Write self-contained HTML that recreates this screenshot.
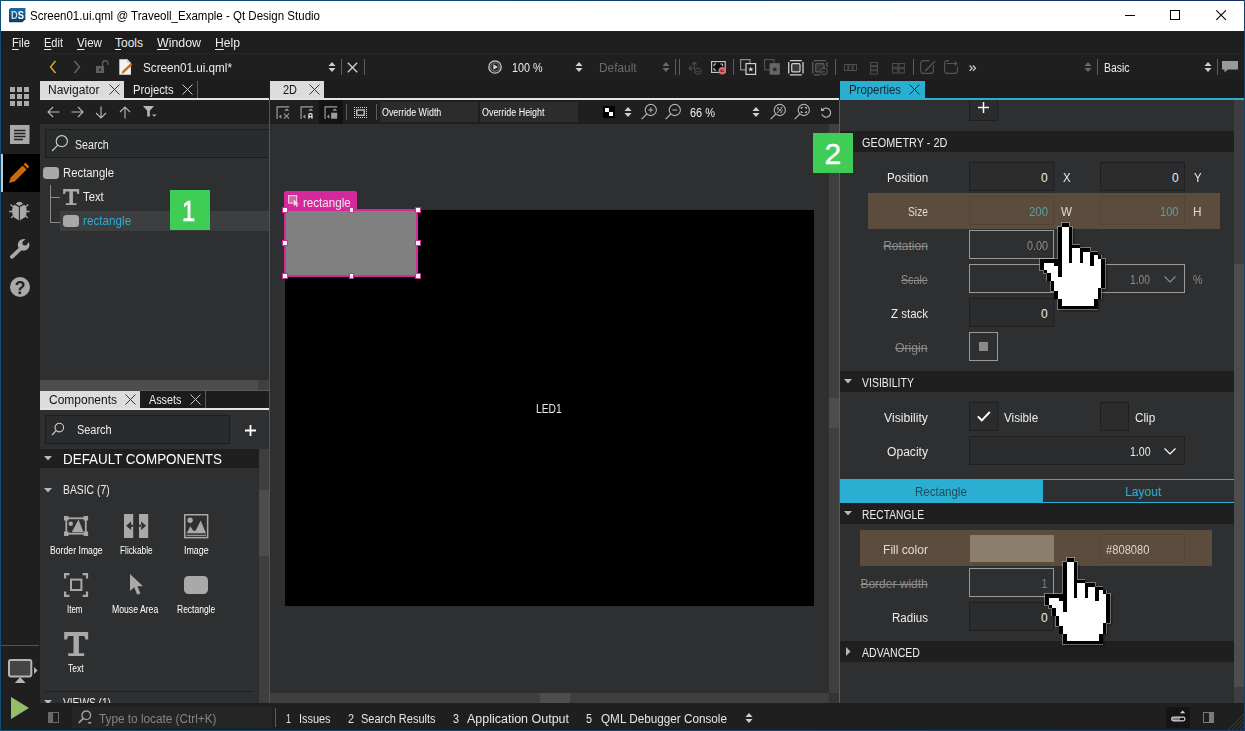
<!DOCTYPE html>
<html lang="en">
<head>
<meta charset="utf-8">
<title>Screen01.ui.qml @ Traveoll_Example - Qt Design Studio</title>
<style>
*{box-sizing:border-box;margin:0;padding:0}
html,body{width:1245px;height:731px;overflow:hidden;background:#1f1f1f}
body{font-family:"Liberation Sans",sans-serif;font-size:12px;color:#fff;position:relative}
#win{position:absolute;left:0;top:0;width:1245px;height:731px;background:#1f1f1f;overflow:hidden}
#win div,#win span,#win svg{position:absolute}
#win svg{overflow:visible}
.t{white-space:nowrap;transform-origin:0 0}
.t u{text-decoration-thickness:1px;text-underline-offset:1.5px}
.s{text-decoration:line-through;text-decoration-thickness:1px}
</style>
</head>
<body>
<div id="win">

<div style="left:0px;top:1px;width:1245px;height:30px;background:#fff;"></div>
<svg style="left:8.9px;top:7.9px;" width="16.4" height="14.2" viewBox="0 0 16.4 14.2"><defs><linearGradient id="dsg" x1="0" y1="0" x2="0" y2="1"><stop offset="0" stop-color="#1a6a9c"/><stop offset="1" stop-color="#0a3c64"/></linearGradient></defs><path d="M1.6 0H16.4V11.2L13.4 14.2H0V1.6Z" fill="url(#dsg)"/></svg>
<span class="t" style="left:10.60px;top:11.00px;font-size:10px;line-height:10px;color:#ffffff;font-weight:bold;transform:scaleX(0.9358);"><i style="font-style:normal;color:#c4d8e8">D</i>S</span>
<span class="t" style="left:30.30px;top:10.00px;font-size:12.5px;line-height:12.5px;color:#000;transform:scaleX(0.9209);">Screen01.ui.qml @ Traveoll_Example - Qt Design Studio</span>
<div style="left:1125px;top:15px;width:10px;height:1px;background:#000;"></div>
<svg style="left:1170px;top:10px;" width="10" height="10" viewBox="0 0 10 10"><rect x=".5" y=".5" width="9" height="9" fill="none" stroke="#000"/></svg>
<svg style="left:1216px;top:10px;" width="10" height="10" viewBox="0 0 10 10"><path d="M.3 .3L9.9 9.9M9.9 .3L.3 9.9" stroke="#000" stroke-width="1.1"/></svg>
<div style="left:0px;top:31px;width:1245px;height:23px;background:#1e1e1e;"></div>
<span class="t" style="left:12.00px;top:37.00px;font-size:12px;line-height:12px;color:#ececec;transform:scaleX(0.9309);"><u>F</u>ile</span>
<span class="t" style="left:44.00px;top:37.00px;font-size:12px;line-height:12px;color:#ececec;transform:scaleX(0.9188);"><u>E</u>dit</span>
<span class="t" style="left:77.00px;top:37.00px;font-size:12px;line-height:12px;color:#ececec;transform:scaleX(0.9692);"><u>V</u>iew</span>
<span class="t" style="left:115.00px;top:37.00px;font-size:12px;line-height:12px;color:#ececec;"><u>T</u>ools</span>
<span class="t" style="left:157.00px;top:37.00px;font-size:12px;line-height:12px;color:#ececec;transform:scaleX(1.0309);"><u>W</u>indow</span>
<span class="t" style="left:215.00px;top:37.00px;font-size:12px;line-height:12px;color:#ececec;transform:scaleX(1.0129);"><u>H</u>elp</span>
<div style="left:40px;top:54px;width:1205px;height:25px;background:#1f1f1f;"></div>
<div style="left:40px;top:53px;width:1205px;height:1px;background:#262626;"></div>
<svg style="left:49px;top:60px;" width="8" height="14" viewBox="0 0 8 14"><path d="M6.5 1L1.5 7L6.5 13" fill="none" stroke="#e8b21a" stroke-width="1.35"/></svg>
<svg style="left:73px;top:60px;" width="8" height="14" viewBox="0 0 8 14"><path d="M1.5 1L6.5 7L1.5 13" fill="none" stroke="#6a6a6a" stroke-width="1.35"/></svg>
<svg style="left:96px;top:60px;" width="13" height="13" viewBox="0 0 13 13"><rect x="0" y="6" width="8" height="7" fill="#5f5f5f"/><rect x="3" y="8.5" width="2" height="2.5" fill="#2a2a2a"/><path d="M6.5 6V3.5A2.7 2.7 0 0 1 12 3.5V5" fill="none" stroke="#5f5f5f" stroke-width="1.3"/></svg>
<svg style="left:119px;top:59px;" width="14" height="16" viewBox="0 0 14 16"><path d="M.3 .3H8.4L11.9 3.8V15.7H.3Z" fill="#f2f2f2"/><path d="M8.4 .3V3.8H11.9Z" fill="#bdbdbd"/><path d="M4 13.2L12.7 4.9" stroke="#c96a0c" stroke-width="2.3"/><path d="M2.5 14.8L3.2 12.3L5 14.1Z" fill="#c96a0c"/></svg>
<span class="t" style="left:143.00px;top:62.00px;font-size:12px;line-height:12px;color:#ececec;transform:scaleX(0.9739);">Screen01.ui.qml*</span>
<svg style="left:327.5px;top:61px;" width="8" height="12" viewBox="0 0 8 12"><path d="M0.5 5L4 1L7.5 5Z M0.5 7L4 11L7.5 7Z" fill="#d0d0d0"/></svg>
<div style="left:341px;top:59px;width:1px;height:16px;background:#5c5c5c;"></div>
<svg style="left:347px;top:62px;" width="11" height="11" viewBox="0 0 11 11"><path d="M.8 .8L10.2 10.2M10.2 .8L.8 10.2" stroke="#d0d0d0" stroke-width="1.3"/></svg>
<div style="left:364px;top:59px;width:1px;height:16px;background:#5c5c5c;"></div>
<svg style="left:488px;top:60px;" width="14" height="14" viewBox="0 0 14 14"><circle cx="7" cy="7" r="6.2" fill="none" stroke="#c8c8c8" stroke-width="1.3"/><circle cx="7" cy="7" r="4.2" fill="none" stroke="#9a9a9a" stroke-width=".8"/><path d="M5.3 4.2L10 7L5.3 9.8Z" fill="#d8d8d8"/></svg>
<span class="t" style="left:512.40px;top:62.00px;font-size:12px;line-height:12px;color:#ececec;transform:scaleX(0.8964);">100 %</span>
<svg style="left:574.5px;top:61px;" width="8" height="12" viewBox="0 0 8 12"><path d="M0.5 5L4 1L7.5 5Z M0.5 7L4 11L7.5 7Z" fill="#d0d0d0"/></svg>
<span class="t" style="left:599.40px;top:62.00px;font-size:12px;line-height:12px;color:#6a6a6a;transform:scaleX(0.9889);">Default</span>
<svg style="left:662.4px;top:61px;" width="8" height="12" viewBox="0 0 8 12"><path d="M0.5 5L4 1L7.5 5Z M0.5 7L4 11L7.5 7Z" fill="#6a6a6a"/></svg>
<div style="left:675px;top:59px;width:1px;height:16px;background:#5c5c5c;"></div>
<div style="left:679px;top:59px;width:1px;height:16px;background:#5c5c5c;"></div>
<svg style="left:688px;top:61px;" width="14" height="14" viewBox="0 0 14 14"><path d="M6.5 7.2V1.2M4.2 3.5L6.5 1.2L8.8 3.5M6.5 7.2H1.2M3.5 4.9L1.2 7.2L3.5 9.5" fill="none" stroke="#4c4c4c" stroke-width="1.1"/><path d="M6.5 8.5V12.5M8 7.2H12" fill="none" stroke="#4c4c4c" stroke-width="1" stroke-dasharray="1 1.4"/><circle cx="10" cy="10.2" r="3.1" fill="#1f1f1f" stroke="#4c4c4c" stroke-width="1"/><path d="M8.6 10.6H11.3M8.6 10.6L9.8 9.4" stroke="#4c4c4c" stroke-width=".9" fill="none"/></svg>
<svg style="left:710.5px;top:61px;" width="15" height="12" viewBox="0 0 15 12"><rect x=".6" y=".6" width="13.6" height="10.8" fill="#0c0c0c" stroke="#c4c4c4" stroke-width="1.2"/><path d="M3 5.2V3H5.2M9.4 3H11.6V5.2M3 6.9V9.1H5.2" fill="none" stroke="#e4e4e4" stroke-width=".9"/><circle cx="11.2" cy="9.7" r="3.7" fill="#e0686c"/><path d="M9.5 10.2H12.8M9.5 10.2L11 8.6" stroke="#4a2020" stroke-width="1" fill="none"/></svg>
<div style="left:733px;top:59px;width:1px;height:16px;background:#5c5c5c;"></div>
<svg style="left:740px;top:59px;" width="16" height="16" viewBox="0 0 16 16"><rect x=".6" y=".6" width="9.4" height="10.2" fill="none" stroke="#8e8e8e" stroke-width="1.2"/><rect x="6" y="4.6" width="9.6" height="10.8" fill="#1f1f1f" stroke="#d2d2d2" stroke-width="1.2"/><path d="M10.8 7.6L11.6 9.5H13.5L12 10.7L12.6 12.6L10.8 11.4L9 12.6L9.6 10.7L8.1 9.5H10Z" fill="#d2d2d2"/></svg>
<svg style="left:764px;top:59px;" width="16" height="16" viewBox="0 0 16 16"><rect x=".6" y=".6" width="9.4" height="10.2" fill="none" stroke="#505050" stroke-width="1.2"/><rect x="5.6" y="4.2" width="10.2" height="11.5" fill="#666"/><path d="M10.8 7.6L11.6 9.5H13.5L12 10.7L12.6 12.6L10.8 11.4L9 12.6L9.6 10.7L8.1 9.5H10Z" fill="#222"/></svg>
<svg style="left:788px;top:59.5px;" width="16" height="16" viewBox="0 0 16 16"><path d="M1.9 .7H13.8M1.9 14.8H13.8M.7 1.9V13.6M15 1.9V13.6" stroke="#d2d2d2" stroke-width="1.3"/><rect x="3.7" y="3.7" width="8.3" height="8.1" rx="1" fill="#3a3a3a" stroke="#d2d2d2" stroke-width="1.2"/></svg>
<svg style="left:812px;top:59.5px;" width="16" height="16" viewBox="0 0 16 16"><path d="M1.9 .7H13.8M1.9 14.8H8M.7 1.9V13.6M15 1.9V7.5" stroke="#5e5e5e" stroke-width="1.3"/><rect x="3.7" y="3.7" width="8.3" height="8.1" rx="1" fill="#303030" stroke="#5e5e5e" stroke-width="1.2"/><circle cx="12" cy="11.5" r="3.4" fill="#1f1f1f" stroke="#5e5e5e" stroke-width="1"/><path d="M10.4 12H13.4M10.4 12L11.7 10.7" stroke="#5e5e5e" stroke-width=".9" fill="none"/></svg>
<div style="left:835px;top:59px;width:1px;height:16px;background:#5c5c5c;"></div>
<svg style="left:844px;top:63.5px;" width="14" height="7" viewBox="0 0 14 7"><rect x=".5" y=".5" width="3.4" height="6" fill="none" stroke="#4e4e4e"/><rect x="4.8" y=".5" width="3.4" height="6" fill="none" stroke="#4e4e4e"/><rect x="9.1" y=".5" width="3.4" height="6" fill="none" stroke="#4e4e4e"/></svg>
<svg style="left:870px;top:61.5px;" width="9" height="13" viewBox="0 0 9 13"><rect x=".5" y=".5" width="7" height="3.3" fill="none" stroke="#4e4e4e"/><rect x=".5" y="4.6" width="7" height="3.3" fill="none" stroke="#4e4e4e"/><rect x=".5" y="8.7" width="7" height="3.3" fill="none" stroke="#4e4e4e"/></svg>
<svg style="left:892px;top:62.5px;" width="14" height="11" viewBox="0 0 14 11"><rect x=".5" y=".5" width="5.4" height="4.2" fill="none" stroke="#4e4e4e"/><rect x="7" y=".5" width="5.4" height="4.2" fill="none" stroke="#4e4e4e"/><rect x=".5" y="5.8" width="5.4" height="4.2" fill="none" stroke="#4e4e4e"/><rect x="7" y="5.8" width="5.4" height="4.2" fill="none" stroke="#4e4e4e"/></svg>
<div style="left:913px;top:59px;width:1px;height:16px;background:#5c5c5c;"></div>
<svg style="left:920px;top:60px;" width="16" height="15" viewBox="0 0 16 15"><path d="M9.5 .6H3.6A3 3 0 0 0 .6 3.6V10.4A3 3 0 0 0 3.6 13.4H10.4A3 3 0 0 0 13.4 10.4V5" fill="none" stroke="#565656" stroke-width="1.1"/><path d="M5 11.2L15 1" stroke="#565656" stroke-width="1.3"/></svg>
<svg style="left:944px;top:60px;" width="16" height="15" viewBox="0 0 16 15"><path d="M.6 5V10.4A3 3 0 0 0 3.6 13.4H10.4A3 3 0 0 0 13.4 10.4V6.5" fill="none" stroke="#565656" stroke-width="1.1"/><path d="M.6 5V3.6A3 3 0 0 1 3.6 .6H5M2.5 3.5H12.8M10.6 1.3L12.8 3.5L10.6 5.7" fill="none" stroke="#565656" stroke-width="1.1"/></svg>
<svg style="left:968.5px;top:64.5px;" width="8" height="7" viewBox="0 0 8 7"><path d="M.6 .5L3.2 3.2L.6 5.9M3.9 .5L6.5 3.2L3.9 5.9" fill="none" stroke="#d0d0d0" stroke-width="1.2"/></svg>
<svg style="left:1084.3px;top:61px;" width="8" height="12" viewBox="0 0 8 12"><path d="M0.5 5L4 1L7.5 5Z M0.5 7L4 11L7.5 7Z" fill="#6a6a6a"/></svg>
<div style="left:1097px;top:59px;width:1px;height:16px;background:#5c5c5c;"></div>
<span class="t" style="left:1103.60px;top:62.00px;font-size:12px;line-height:12px;color:#ececec;transform:scaleX(0.8724);">Basic</span>
<svg style="left:1204px;top:61px;" width="8" height="12" viewBox="0 0 8 12"><path d="M0.5 5L4 1L7.5 5Z M0.5 7L4 11L7.5 7Z" fill="#d0d0d0"/></svg>
<div style="left:1217px;top:59px;width:1px;height:16px;background:#5c5c5c;"></div>
<svg style="left:1222px;top:61px;" width="16" height="12" viewBox="0 0 16 12"><path d="M0 0H16V8.5H6L2.5 11.5V8.5H0Z" fill="#9a9a9a"/></svg>
<div style="left:1px;top:54px;width:39px;height:676px;background:#1f1f1f;"></div>
<svg style="left:10px;top:87px;" width="19" height="19" viewBox="0 0 19 19"><g fill="#a9a9a9"><rect x="0" y="0" width="5" height="5"/><rect x="7" y="0" width="5" height="5"/><rect x="14" y="0" width="5" height="5"/><rect x="0" y="7" width="5" height="5"/><rect x="7" y="7" width="5" height="5"/><rect x="14" y="7" width="5" height="5"/><rect x="0" y="14" width="5" height="5"/><rect x="7" y="14" width="5" height="5"/><rect x="14" y="14" width="5" height="5"/></g></svg>
<svg style="left:10px;top:125px;" width="20" height="19" viewBox="0 0 20 19"><rect width="19.5" height="19" fill="#a9a9a9"/><path d="M4 5.5H15.5M4 8.5H15.5M4 11.5H15.5M4 14.5H13" stroke="#222" stroke-width="1.3"/></svg>
<div style="left:1px;top:154px;width:39px;height:38px;background:#000;"></div>
<div style="left:1px;top:154px;width:2px;height:38px;background:#c8c8c8;"></div>
<svg style="left:8px;top:162px;" width="22" height="22" viewBox="0 0 22 22"><path d="M1 21L2.6 15.4L14.6 3.4L18.6 7.4L6.6 19.4Z" fill="#c96a0c"/><path d="M15.6 2.4L17.4 .6L21.4 4.6L19.6 6.4Z" fill="#c96a0c"/></svg>
<svg style="left:9px;top:200px;" width="22" height="21" viewBox="0 0 22 21"><path d="M6.6 3.7Q10.4 -.4 14.2 3.7L10.4 5.9Z" fill="#a9a9a9"/><path d="M9.9 7.1L5.5 4.7Q3.1 6.6 3.1 11.2Q3.1 15.2 5 17.2L9.9 20.4Z" fill="#a9a9a9"/><path d="M10.9 7.1L15.3 4.7Q17.7 6.6 17.7 11.2Q17.7 15.2 15.8 17.2L10.9 20.4Z" fill="#a9a9a9"/><path d="M4.4 7L1.5 4.6M16.4 7L19.3 4.6M3.4 11.5H.2M17.4 11.5H20.6M4.6 15.6L2 17.9M16.2 15.6L18.8 17.9" stroke="#a9a9a9" stroke-width="1.3"/></svg>
<svg style="left:9px;top:238px;" width="22" height="22" viewBox="0 0 22 22"><path d="M2.9 18.8L12.5 9.8" stroke="#a9a9a9" stroke-width="3.8" stroke-linecap="round"/><circle cx="14.6" cy="6.9" r="5.85" fill="#a9a9a9"/><circle cx="15.9" cy="5" r="2.5" fill="#1f1f1f"/><path d="M15.9 5L22.5 -1.6" stroke="#1f1f1f" stroke-width="4.4"/></svg>
<svg style="left:10px;top:277px;" width="20" height="20" viewBox="0 0 20 20"><circle cx="10" cy="10" r="10" fill="#a9a9a9"/></svg>
<span class="t" style="left:14.65px;top:280.00px;font-size:17.5px;line-height:17.5px;color:#1f1f1f;font-weight:bold;">?</span>
<div style="left:1px;top:645px;width:38px;height:1px;background:#555;"></div>
<svg style="left:8px;top:659px;" width="25" height="25" viewBox="0 0 25 25"><rect x="1" y="1" width="22.3" height="16.4" rx="1.8" fill="#454545" stroke="#b4b4b4" stroke-width="2"/><path d="M12.2 18L17.6 24H6.8Z" fill="#b4b4b4"/></svg>
<svg style="left:34px;top:667px;" width="4" height="7" viewBox="0 0 4 7"><path d="M0 0L3.5 3.5L0 7Z" fill="#b4b4b4"/></svg>
<svg style="left:11px;top:697px;" width="18" height="22" viewBox="0 0 18 22"><path d="M0 0L18 11L0 22Z" fill="#93bf6b"/></svg>
<div style="left:40px;top:79px;width:229px;height:311px;background:#2e2f30;"></div>
<div style="left:40px;top:79px;width:229px;height:19px;background:#1c1c1c;"></div>
<div style="left:40px;top:81px;width:84px;height:17px;background:#dcdcdc;"></div>
<span class="t" style="left:48.40px;top:84.00px;font-size:12.5px;line-height:12.5px;color:#141414;transform:scaleX(0.9608);">Navigator</span>
<svg style="left:108.5px;top:84px;" width="11" height="11" viewBox="0 0 11 11"><path d="M.5 .5L10.5 10.5M10.5 .5L.5 10.5" stroke="#333" stroke-width="1"/></svg>
<span class="t" style="left:132.50px;top:84.00px;font-size:12.5px;line-height:12.5px;color:#ececec;transform:scaleX(0.8969);">Projects</span>
<svg style="left:182px;top:84px;" width="11" height="11" viewBox="0 0 11 11"><path d="M.5 .5L10.5 10.5M10.5 .5L.5 10.5" stroke="#c8c8c8" stroke-width="1"/></svg>
<div style="left:197px;top:81px;width:1px;height:17px;background:#5c5c5c;"></div>
<div style="left:40px;top:98px;width:229px;height:2px;background:#e4e4e4;"></div>
<div style="left:40px;top:100px;width:229px;height:24px;background:#1f1f1f;"></div>
<svg style="left:47px;top:105.5px;" width="13" height="12" viewBox="0 0 13 12"><path d="M12.5 6H1M6 1L1 6L6 11" fill="none" stroke="#b8b8b8" stroke-width="1.1"/></svg>
<svg style="left:71px;top:105.5px;" width="13" height="12" viewBox="0 0 13 12"><path d="M.5 6H12M7 1L12 6L7 11" fill="none" stroke="#b8b8b8" stroke-width="1.1"/></svg>
<svg style="left:95px;top:105.5px;" width="12" height="13" viewBox="0 0 12 13"><path d="M6 .5V12M1 7L6 12L11 7" fill="none" stroke="#b8b8b8" stroke-width="1.1"/></svg>
<svg style="left:119px;top:105.5px;" width="12" height="13" viewBox="0 0 12 13"><path d="M6 12.5V1M1 6L6 1L11 6" fill="none" stroke="#b8b8b8" stroke-width="1.1"/></svg>
<svg style="left:143px;top:106px;" width="14" height="12" viewBox="0 0 14 12"><path d="M0 0H11L6.8 4.8V10.5H4.2V4.8Z" fill="#b8b8b8"/><path d="M9 8.5H13.5L11.25 10.8Z" fill="#b8b8b8"/></svg>
<div style="left:45px;top:129px;width:225px;height:29px;background:#2a2b2c;border:1px solid #1d1d1d;"></div>
<svg style="left:51px;top:134px;" width="18" height="18" viewBox="0 0 18 18"><circle cx="10.8" cy="7.2" r="5.6" fill="none" stroke="#d0d0d0" stroke-width="1.1"/><path d="M6.8 11.2L1 17" stroke="#d0d0d0" stroke-width="1.1"/></svg>
<span class="t" style="left:74.60px;top:139.00px;font-size:12.5px;line-height:12.5px;color:#ececec;transform:scaleX(0.8509);">Search</span>
<div style="left:43px;top:167px;width:16px;height:12px;background:#a9a9a9;border-radius:3.5px;"></div>
<span class="t" style="left:63.40px;top:167.00px;font-size:12.5px;line-height:12.5px;color:#ececec;transform:scaleX(0.9061);">Rectangle</span>
<div style="left:50px;top:185px;width:1px;height:38px;background:#8a8a8a;"></div>
<div style="left:50px;top:197px;width:10px;height:1px;background:#8a8a8a;"></div>
<div style="left:50px;top:222px;width:10px;height:1px;background:#8a8a8a;"></div>
<svg style="left:62.7px;top:189px;" width="16.3" height="16" viewBox="0 0 16 16"><path d="M0 0H16V5H14.2L13.4 2.6H9.8V14.2H13.3V16H2.7V14.2H6.2V2.6H2.6L1.8 5H0Z" fill="#a9a9a9"/></svg>
<span class="t" style="left:83.30px;top:191.00px;font-size:12.5px;line-height:12.5px;color:#ececec;transform:scaleX(0.9030);">Text</span>
<div style="left:60px;top:211px;width:209px;height:20px;background:#3d3e3f;"></div>
<div style="left:63px;top:215px;width:16px;height:12px;background:#a9a9a9;border-radius:3.5px;"></div>
<span class="t" style="left:83.30px;top:215.00px;font-size:12.5px;line-height:12.5px;color:#2eaed4;transform:scaleX(0.9373);">rectangle</span>
<div style="left:40px;top:380px;width:218px;height:10px;background:#4d4d4d;"></div>
<div style="left:258px;top:380px;width:11px;height:10px;background:#404040;"></div>
<div style="left:40px;top:390px;width:229px;height:1px;background:#4d4d4d;"></div>
<div style="left:40px;top:391px;width:229px;height:312px;background:#2e2f30;"></div>
<div style="left:40px;top:391px;width:229px;height:17px;background:#1c1c1c;"></div>
<div style="left:40px;top:391px;width:100px;height:17px;background:#dcdcdc;"></div>
<span class="t" style="left:48.50px;top:394.00px;font-size:12.5px;line-height:12.5px;color:#141414;transform:scaleX(0.9594);">Components</span>
<svg style="left:124.5px;top:394px;" width="11" height="11" viewBox="0 0 11 11"><path d="M.5 .5L10.5 10.5M10.5 .5L.5 10.5" stroke="#333" stroke-width="1"/></svg>
<span class="t" style="left:148.80px;top:394.00px;font-size:12.5px;line-height:12.5px;color:#ececec;transform:scaleX(0.8637);">Assets</span>
<svg style="left:190px;top:394px;" width="11" height="11" viewBox="0 0 11 11"><path d="M.5 .5L10.5 10.5M10.5 .5L.5 10.5" stroke="#c8c8c8" stroke-width="1"/></svg>
<div style="left:205px;top:391px;width:1px;height:17px;background:#5c5c5c;"></div>
<div style="left:40px;top:408px;width:229px;height:2px;background:#e4e4e4;"></div>
<div style="left:140px;top:390px;width:129px;height:1px;background:#5a5a5a;"></div>
<div style="left:45px;top:415px;width:185px;height:29px;background:#2a2b2c;border:1px solid #1d1d1d;"></div>
<svg style="left:51px;top:422px;" width="14" height="14" viewBox="0 0 14 14"><circle cx="8.3" cy="5.6" r="4.3" fill="none" stroke="#d0d0d0" stroke-width="1.1"/><path d="M5.2 8.7L1 13" stroke="#d0d0d0" stroke-width="1.1"/></svg>
<span class="t" style="left:77.00px;top:424.00px;font-size:12.5px;line-height:12.5px;color:#ececec;transform:scaleX(0.8736);">Search</span>
<svg style="left:245px;top:425px;" width="11" height="11" viewBox="0 0 11 11"><path d="M5.5 0V11M0 5.5H11" stroke="#fff" stroke-width="1.8"/></svg>
<div style="left:40px;top:449px;width:219px;height:19px;background:#1f1f1f;"></div>
<svg style="left:44px;top:455.5px;" width="8" height="5" viewBox="0 0 8 5"><path d="M0 0H8L4 4.5Z" fill="#b8b8b8"/></svg>
<span class="t" style="left:62.70px;top:451.00px;font-size:15px;line-height:15px;color:#fff;transform:scaleX(0.8942);">DEFAULT COMPONENTS</span>
<div style="left:259px;top:449px;width:10px;height:254px;background:#3e3e3e;"></div>
<div style="left:259px;top:490px;width:10px;height:66px;background:#4d4d4d;"></div>
<svg style="left:44px;top:487.5px;" width="8" height="5" viewBox="0 0 8 5"><path d="M0 0H8L4 4.5Z" fill="#b8b8b8"/></svg>
<span class="t" style="left:62.70px;top:484.00px;font-size:12.5px;line-height:12.5px;color:#ececec;transform:scaleX(0.8282);">BASIC (7)</span>
<svg style="left:64px;top:516px;" width="24.1" height="20" viewBox="0 0 24.1 20"><rect x="2.3" y="2.3" width="19.5" height="15.4" fill="none" stroke="#a9a9a9" stroke-width="1.8"/><rect x="0" y="0" width="4.5" height="4.5" fill="#a9a9a9"/><rect x="19.6" y="0" width="4.5" height="4.5" fill="#a9a9a9"/><rect x="0" y="15.5" width="4.5" height="4.5" fill="#a9a9a9"/><rect x="19.6" y="15.5" width="4.5" height="4.5" fill="#a9a9a9"/><circle cx="6.8" cy="7.7" r="2.2" fill="#a9a9a9"/><path d="M7.7 16.2L14.5 3.5L19.6 16.2Z" fill="#a9a9a9"/></svg>
<svg style="left:123.9px;top:514px;" width="24.2" height="24" viewBox="0 0 24.2 24"><rect x="0" y="0" width="9.2" height="24" fill="#a9a9a9"/><rect x="15" y="0" width="9.2" height="24" fill="#a9a9a9"/><path d="M2.1 11.8L7.1 7.5V16.1Z M6.5 10.8H9.2V12.8H6.5Z M22.1 11.8L17.1 7.5V16.1Z M15 10.8H17.7V12.8H15Z" fill="#2e2f30"/></svg>
<svg style="left:183.9px;top:513.8px;" width="24.4" height="24.4" viewBox="0 0 24.4 24.4"><rect x=".75" y=".75" width="22.9" height="22.9" fill="none" stroke="#a9a9a9" stroke-width="1.5"/><circle cx="6.1" cy="6.2" r="2.7" fill="#a9a9a9"/><path d="M2.6 19.2L6.4 12.2L9.2 16.7H11.6L16.7 6.4L22 19.2Z" fill="#a9a9a9"/><rect x="2.6" y="20.8" width="19.4" height="1" fill="#a9a9a9"/></svg>
<span class="t" style="left:49.60px;top:546.00px;font-size:10px;line-height:10px;color:#ffffff;transform:scaleX(0.8682);">Border Image</span>
<span class="t" style="left:119.50px;top:546.00px;font-size:10px;line-height:10px;color:#ffffff;transform:scaleX(0.8262);">Flickable</span>
<span class="t" style="left:183.50px;top:546.00px;font-size:10px;line-height:10px;color:#ffffff;transform:scaleX(0.8887);">Image</span>
<span class="t" style="left:66.50px;top:605.00px;font-size:10px;line-height:10px;color:#ffffff;transform:scaleX(0.7970);">Item</span>
<span class="t" style="left:111.80px;top:605.00px;font-size:10px;line-height:10px;color:#ffffff;transform:scaleX(0.8657);">Mouse Area</span>
<span class="t" style="left:176.80px;top:605.00px;font-size:10px;line-height:10px;color:#ffffff;transform:scaleX(0.8483);">Rectangle</span>
<span class="t" style="left:67.50px;top:664.00px;font-size:10px;line-height:10px;color:#ffffff;transform:scaleX(0.8452);">Text</span>
<svg style="left:64px;top:573px;" width="24.1" height="24" viewBox="0 0 24.1 24"><path d="M1.1 5.5V1.1H5.5M18.6 1.1H23V5.5M23 18.5V22.9H18.6M5.5 22.9H1.1V18.5" fill="none" stroke="#a9a9a9" stroke-width="2.2"/><rect x="7" y="6.6" width="10.4" height="10.4" fill="none" stroke="#a9a9a9" stroke-width="2"/></svg>
<svg style="left:129.6px;top:573.7px;" width="14" height="23" viewBox="0 0 14 23"><path d="M0 0V17L4.2 13.2L7.2 20.8L10.4 19.5L7.4 12.2H13Z" fill="#a9a9a9"/></svg>
<div style="left:184px;top:576px;width:24.3px;height:18px;background:#a9a9a9;border-radius:4.5px;"></div>
<svg style="left:64px;top:632px;" width="24.4" height="24" viewBox="0 0 16 16"><path d="M0 0H16V5H14.2L13.4 2.6H9.8V14.2H13.3V16H2.7V14.2H6.2V2.6H2.6L1.8 5H0Z" fill="#a9a9a9"/></svg>
<div style="left:45px;top:691px;width:209px;height:1px;background:#1f1f1f;"></div>
<svg style="left:44px;top:700px;" width="8" height="5" viewBox="0 0 8 5"><path d="M0 0H8L4 4.5Z" fill="#b8b8b8"/></svg>
<span class="t" style="left:62.70px;top:697.00px;font-size:12.5px;line-height:12.5px;color:#ececec;transform:scaleX(0.8131);">VIEWS (1)</span>
<div style="left:270px;top:79px;width:569px;height:624px;background:#2e2f30;"></div>
<div style="left:269px;top:100px;width:1px;height:603px;background:#555;"></div>
<div style="left:270px;top:79px;width:569px;height:19px;background:#1c1c1c;"></div>
<div style="left:270px;top:81px;width:54px;height:17px;background:#dcdcdc;"></div>
<span class="t" style="left:282.50px;top:84.00px;font-size:12.5px;line-height:12.5px;color:#141414;transform:scaleX(0.8761);">2D</span>
<svg style="left:308.5px;top:84px;" width="11" height="11" viewBox="0 0 11 11"><path d="M.5 .5L10.5 10.5M10.5 .5L.5 10.5" stroke="#333" stroke-width="1"/></svg>
<div style="left:270px;top:98px;width:569px;height:2px;background:#e4e4e4;"></div>
<div style="left:270px;top:100px;width:569px;height:24px;background:#1f1f1f;"></div>
<div style="left:319px;top:100px;width:24px;height:24px;background:#131313;"></div>
<svg style="left:275.7px;top:106px;" width="14" height="14" viewBox="0 0 14 14"><path d="M1.1 13V.8H13.3" fill="none" stroke="#9c9c9c" stroke-width="1.2"/><path d="M2.9 10.5L5.3 8.4V12.7Z" fill="#9c9c9c"/><path d="M8.2 4.8L10.8 2.6L13.3 4.8Z" fill="#9c9c9c"/><path d="M7.9 7.6L13.1 12.7M13.1 7.6L7.9 12.7" stroke="#9c9c9c" stroke-width="1.1"/></svg>
<svg style="left:299.8px;top:106px;" width="14" height="14" viewBox="0 0 14 14"><path d="M1.1 13V.8H13.3" fill="none" stroke="#9c9c9c" stroke-width="1.2"/><path d="M2.9 10.5L5.3 8.4V12.7Z" fill="#9c9c9c"/><path d="M8.2 4.8L10.8 2.6L13.3 4.8Z" fill="#9c9c9c"/><path d="M8.9 12.8V8.7A1.1 1.1 0 0 1 10 7.6H10.9A1.1 1.1 0 0 1 12 8.7V12.8M8.9 10.7H12" fill="none" stroke="#e0e0e0" stroke-width="1.3"/></svg>
<svg style="left:324px;top:106px;" width="14" height="14" viewBox="0 0 14 14"><path d="M1.1 13V.8H13.3" fill="none" stroke="#9c9c9c" stroke-width="1.2"/><path d="M2.9 10.5L5.3 8.4V12.7Z" fill="#9c9c9c"/><path d="M8.2 4.8L10.8 2.6L13.3 4.8Z" fill="#9c9c9c"/><rect x="7.1" y="6.7" width="6.1" height="6" fill="#9c9c9c"/></svg>
<div style="left:346px;top:104px;width:1px;height:16px;background:#5c5c5c;"></div>
<svg style="left:354px;top:107px;" width="13" height="11" viewBox="0 0 13 11"><path d="M0 .5H13M0 10.5H13M.5 0V11M12.5 0V11" fill="none" stroke="#d8d8d8" stroke-width="1" stroke-dasharray="1 1" shape-rendering="crispEdges"/><rect x="2.8" y="3" width="7.4" height="5.2" fill="none" stroke="#d8d8d8" stroke-width="1.2"/></svg>
<div style="left:376px;top:104px;width:1px;height:16px;background:#5c5c5c;"></div>
<div style="left:380px;top:102px;width:98px;height:20px;background:#2b2c2d;"></div>
<span class="t" style="left:381.70px;top:108.00px;font-size:10px;line-height:10px;color:#ffffff;transform:scaleX(0.8892);">Override Width</span>
<div style="left:480px;top:102px;width:98px;height:20px;background:#2b2c2d;"></div>
<span class="t" style="left:482.00px;top:108.00px;font-size:10px;line-height:10px;color:#ffffff;transform:scaleX(0.8925);">Override Height</span>
<div style="left:603px;top:106px;width:12px;height:12px;background:#000;"></div>
<div style="left:605px;top:108px;width:4px;height:4px;background:#fff;"></div>
<div style="left:609px;top:112px;width:4px;height:4px;background:#fff;"></div>
<svg style="left:623.5px;top:106px;" width="8" height="12" viewBox="0 0 8 12"><path d="M0.5 5L4 1L7.5 5Z M0.5 7L4 11L7.5 7Z" fill="#d0d0d0"/></svg>
<svg style="left:641px;top:104.4px;" width="16" height="16" viewBox="0 0 16 16"><circle cx="9.8" cy="6" r="5.6" fill="none" stroke="#b4b4b4" stroke-width="1.1"/><path d="M5.8 10L.6 15.2" stroke="#b4b4b4" stroke-width="1.1"/><path d="M7.3 6H12.3M9.8 3.5V8.5" stroke="#b4b4b4" stroke-width="1"/></svg>
<svg style="left:665.2px;top:104.4px;" width="16" height="16" viewBox="0 0 16 16"><circle cx="9.8" cy="6" r="5.6" fill="none" stroke="#b4b4b4" stroke-width="1.1"/><path d="M5.8 10L.6 15.2" stroke="#b4b4b4" stroke-width="1.1"/><path d="M7.3 6H12.3" stroke="#b4b4b4" stroke-width="1"/></svg>
<span class="t" style="left:690.40px;top:107.00px;font-size:12px;line-height:12px;color:#ececec;transform:scaleX(0.9140);">66 %</span>
<svg style="left:752.3px;top:106px;" width="8" height="12" viewBox="0 0 8 12"><path d="M0.5 5L4 1L7.5 5Z M0.5 7L4 11L7.5 7Z" fill="#d0d0d0"/></svg>
<svg style="left:770px;top:104.4px;" width="16" height="16" viewBox="0 0 16 16"><circle cx="9.8" cy="6" r="5.6" fill="none" stroke="#b4b4b4" stroke-width="1.1"/><path d="M5.8 10L.6 15.2" stroke="#b4b4b4" stroke-width="1.1"/><path d="M7.6 3.8L12 8.2M12 3.8L7.6 8.2" stroke="#b4b4b4" stroke-width="1"/><rect x="7.3" y="3.5" width="5" height="5" fill="none" stroke="#b4b4b4" stroke-width=".8" stroke-dasharray="1.5 2"/></svg>
<svg style="left:793.7px;top:104.4px;" width="16" height="16" viewBox="0 0 16 16"><circle cx="9.8" cy="6" r="5.6" fill="none" stroke="#b4b4b4" stroke-width="1.1"/><path d="M5.8 10L.6 15.2" stroke="#b4b4b4" stroke-width="1.1"/><path d="M7.3 5V3.5H8.8M10.8 3.5H12.3V5M12.3 7V8.5H10.8M8.8 8.5H7.3V7" fill="none" stroke="#b4b4b4" stroke-width="1.1"/></svg>
<svg style="left:820px;top:106px;" width="12" height="12" viewBox="0 0 12 12"><path d="M2.6 3.8A4.5 4.5 0 1 1 1.9 8.3" fill="none" stroke="#b4b4b4" stroke-width="1.2"/><path d="M1 1.4V5H4.6Z" fill="#b4b4b4"/></svg>
<div style="left:829px;top:124px;width:10px;height:569px;background:#3f3f3f;"></div>
<div style="left:829px;top:398px;width:10px;height:30px;background:#4d4d4d;"></div>
<div style="left:270px;top:693px;width:559px;height:10px;background:#3f3f3f;"></div>
<div style="left:540px;top:693px;width:30px;height:10px;background:#4d4d4d;"></div>
<div style="left:829px;top:693px;width:10px;height:10px;background:#333435;"></div>
<div style="left:839px;top:100px;width:1px;height:603px;background:#5c5c5c;"></div>
<div style="left:285px;top:210px;width:529px;height:396px;background:#000;"></div>
<span class="t" style="left:535.60px;top:402.00px;font-size:13px;line-height:13px;color:#e8e8e8;transform:scaleX(0.7934);">LED1</span>
<div style="left:284px;top:209px;width:134.2px;height:68px;background:#808080;border:2px solid #d5289b;"></div>
<div style="left:284px;top:191px;width:73.2px;height:19px;background:#d5289b;border-radius:2.5px 2.5px 0 0;"></div>
<svg style="left:288px;top:195px;" width="11" height="12" viewBox="0 0 11 12"><rect x=".6" y=".6" width="8" height="7.5" fill="#c86aa8" stroke="#f2c4e2" stroke-width="1.2"/><path d="M5.8 4.5V11.2L7.5 9.7L8.7 12L9.9 11.4L8.8 9.2H10.8Z" fill="#f6d6ec"/></svg>
<span class="t" style="left:303.40px;top:197.00px;font-size:12.5px;line-height:12.5px;color:#ececec;transform:scaleX(0.9276);">rectangle</span>
<div style="left:282.25px;top:207.25px;width:5.5px;height:5.5px;background:#fff;border:.8px solid #d5289b;"></div>
<div style="left:348.75px;top:207.25px;width:5.5px;height:5.5px;background:#fff;border:.8px solid #d5289b;"></div>
<div style="left:415.25px;top:207.25px;width:5.5px;height:5.5px;background:#fff;border:.8px solid #d5289b;"></div>
<div style="left:282.25px;top:240.25px;width:5.5px;height:5.5px;background:#fff;border:.8px solid #d5289b;"></div>
<div style="left:415.25px;top:240.25px;width:5.5px;height:5.5px;background:#fff;border:.8px solid #d5289b;"></div>
<div style="left:282.25px;top:273.25px;width:5.5px;height:5.5px;background:#fff;border:.8px solid #d5289b;"></div>
<div style="left:348.75px;top:273.25px;width:5.5px;height:5.5px;background:#fff;border:.8px solid #d5289b;"></div>
<div style="left:415.25px;top:273.25px;width:5.5px;height:5.5px;background:#fff;border:.8px solid #d5289b;"></div>
<div style="left:840px;top:79px;width:405px;height:624px;background:#2e2f30;"></div>
<div style="left:840px;top:79px;width:405px;height:19px;background:#1c1c1c;"></div>
<div style="left:840px;top:81px;width:84.5px;height:17px;background:#2aafd3;"></div>
<span class="t" style="left:848.50px;top:84.00px;font-size:12.5px;line-height:12.5px;color:#14262e;transform:scaleX(0.9127);">Properties</span>
<svg style="left:909px;top:84px;" width="11" height="11" viewBox="0 0 11 11"><path d="M.5 .5L10.5 10.5M10.5 .5L.5 10.5" stroke="#14262e" stroke-width="1"/></svg>
<div style="left:840px;top:98px;width:405px;height:2px;background:#2aafd3;"></div>
<div style="left:1234px;top:100px;width:10px;height:164px;background:#3d3e3f;"></div>
<div style="left:1234px;top:264px;width:10px;height:423px;background:#4d4d4d;"></div>
<div style="left:1234px;top:687px;width:10px;height:16px;background:#3d3e3f;"></div>
<div style="left:969px;top:100px;width:29px;height:21px;background:#2b2c2d;border:1px solid #1f1f1f;border-top:none;"></div>
<svg style="left:978px;top:101.5px;" width="11" height="11" viewBox="0 0 11 11"><path d="M5.5 0V11M0 5.5H11" stroke="#fff" stroke-width="1.5"/></svg>
<div style="left:840px;top:131px;width:394px;height:21px;background:#1f1f1f;"></div>
<span class="t" style="left:862.00px;top:137.00px;font-size:12px;line-height:12px;color:#ececec;transform:scaleX(0.9051);">GEOMETRY - 2D</span>
<span class="t" style="left:886.70px;top:172.00px;font-size:12px;line-height:12px;color:#ececec;transform:scaleX(0.9650);">Position</span>
<div style="left:969px;top:162px;width:85px;height:29px;background:#2b2c2d;border:1px solid #1f1f1f;"></div>
<span class="t" style="left:1040.93px;top:172.00px;font-size:12px;line-height:12px;color:#ececec;">0</span>
<span class="t" style="left:1062.80px;top:172.00px;font-size:12px;line-height:12px;color:#ececec;transform:scaleX(0.9495);">X</span>
<div style="left:1100px;top:162px;width:85px;height:29px;background:#2b2c2d;border:1px solid #1f1f1f;"></div>
<span class="t" style="left:1172.03px;top:172.00px;font-size:12px;line-height:12px;color:#ececec;">0</span>
<span class="t" style="left:1193.50px;top:172.00px;font-size:12px;line-height:12px;color:#ececec;transform:scaleX(0.9495);">Y</span>
<div style="left:868px;top:193px;width:352px;height:36px;background:#5b4c3d;"></div>
<span class="t" style="left:907.90px;top:206.00px;font-size:12px;line-height:12px;color:#e2dacf;transform:scaleX(0.8567);">Size</span>
<div style="left:969px;top:196px;width:85px;height:29px;background:#5b4c3d;border:1px solid #524537;"></div>
<span class="t" style="left:1028.60px;top:206.00px;font-size:12px;line-height:12px;color:#5c9ea0;transform:scaleX(0.9489);">200</span>
<span class="t" style="left:1060.50px;top:206.00px;font-size:12px;line-height:12px;color:#e2dacf;transform:scaleX(0.9712);">W</span>
<div style="left:1100px;top:196px;width:85px;height:29px;background:#5b4c3d;border:1px solid #524537;"></div>
<span class="t" style="left:1160.20px;top:206.00px;font-size:12px;line-height:12px;color:#5c9ea0;transform:scaleX(0.9240);">100</span>
<span class="t" style="left:1192.50px;top:206.00px;font-size:12px;line-height:12px;color:#e2dacf;transform:scaleX(0.9808);">H</span>
<span class="t" style="left:883.20px;top:240.00px;font-size:12px;line-height:12px;color:#8c8c8c;text-decoration:line-through;">Rotation</span>
<div style="left:969px;top:230px;width:85px;height:29px;background:#2e2f30;border:1px solid #9a9a9a;"></div>
<span class="t" style="left:1026.60px;top:240.00px;font-size:12px;line-height:12px;color:#8c8c8c;transform:scaleX(0.8991);">0.00</span>
<span class="t" style="left:901.20px;top:274.00px;font-size:12px;line-height:12px;color:#8c8c8c;transform:scaleX(0.8894);text-decoration:line-through;">Scale</span>
<div style="left:969px;top:264px;width:216px;height:29px;background:#2e2f30;border:1px solid #9a9a9a;"></div>
<span class="t" style="left:1130.20px;top:274.00px;font-size:12px;line-height:12px;color:#8c8c8c;transform:scaleX(0.8563);">1.00</span>
<svg style="left:1164px;top:275.5px;" width="12" height="7" viewBox="0 0 12 7"><path d="M.5 .5L6 6L11.5 .5" fill="none" stroke="#8c8c8c" stroke-width="1.2"/></svg>
<span class="t" style="left:1192.70px;top:274.00px;font-size:12px;line-height:12px;color:#8c8c8c;transform:scaleX(0.8904);">%</span>
<span class="t" style="left:890.90px;top:308.00px;font-size:12px;line-height:12px;color:#ececec;transform:scaleX(0.9568);">Z stack</span>
<div style="left:969px;top:298px;width:85px;height:29px;background:#2b2c2d;border:1px solid #1f1f1f;"></div>
<span class="t" style="left:1040.93px;top:308.00px;font-size:12px;line-height:12px;color:#ececec;">0</span>
<span class="t" style="left:895.30px;top:342.00px;font-size:12px;line-height:12px;color:#8c8c8c;transform:scaleX(1.0184);text-decoration:line-through;">Origin</span>
<div style="left:969px;top:332px;width:29px;height:29px;background:#2e2f30;border:1px solid #9a9a9a;"></div>
<div style="left:978.8px;top:342px;width:9.4px;height:9.2px;background:#8a8a8a;"></div>
<div style="left:840px;top:371px;width:394px;height:21px;background:#1f1f1f;"></div>
<svg style="left:844px;top:379px;" width="8" height="5" viewBox="0 0 8 5"><path d="M0 0H8L4 4.5Z" fill="#b8b8b8"/></svg>
<span class="t" style="left:862.00px;top:377.00px;font-size:12px;line-height:12px;color:#ececec;transform:scaleX(0.8744);">VISIBILITY</span>
<span class="t" style="left:883.90px;top:412.00px;font-size:12px;line-height:12px;color:#ececec;transform:scaleX(1.0202);">Visibility</span>
<div style="left:969px;top:402px;width:29px;height:29px;background:#2b2c2d;border:1px solid #1f1f1f;"></div>
<svg style="left:977px;top:411px;" width="14" height="11" viewBox="0 0 14 11"><path d="M.8 5.4L4.8 9.3L12.8 1" fill="none" stroke="#fff" stroke-width="1.9"/></svg>
<span class="t" style="left:1004.00px;top:412.00px;font-size:12px;line-height:12px;color:#ececec;transform:scaleX(0.9734);">Visible</span>
<div style="left:1100px;top:402px;width:29px;height:29px;background:#2b2c2d;border:1px solid #1f1f1f;"></div>
<span class="t" style="left:1134.80px;top:412.00px;font-size:12px;line-height:12px;color:#ececec;transform:scaleX(0.9771);">Clip</span>
<span class="t" style="left:886.90px;top:446.00px;font-size:12px;line-height:12px;color:#ececec;transform:scaleX(1.0078);">Opacity</span>
<div style="left:969px;top:436px;width:216px;height:29px;background:#2b2c2d;border:1px solid #1f1f1f;"></div>
<span class="t" style="left:1130.00px;top:446.00px;font-size:12px;line-height:12px;color:#ececec;transform:scaleX(0.8777);">1.00</span>
<svg style="left:1164px;top:447.5px;" width="12" height="7" viewBox="0 0 12 7"><path d="M.5 .5L6 6L11.5 .5" fill="none" stroke="#fff" stroke-width="1.2"/></svg>
<div style="left:840px;top:479px;width:203px;height:24px;background:#2aafd3;"></div>
<span class="t" style="left:915.20px;top:486.00px;font-size:12px;line-height:12px;color:#1d4c5e;transform:scaleX(0.9586);">Rectangle</span>
<div style="left:1043px;top:479px;width:191px;height:24px;background:#2e2f30;border-top:1.5px solid #2aafd3;border-bottom:1.5px solid #2aafd3;"></div>
<span class="t" style="left:1125.20px;top:486.00px;font-size:12px;line-height:12px;color:#2aafd3;">Layout</span>
<div style="left:840px;top:503px;width:394px;height:21px;background:#1f1f1f;"></div>
<svg style="left:844px;top:511px;" width="8" height="5" viewBox="0 0 8 5"><path d="M0 0H8L4 4.5Z" fill="#b8b8b8"/></svg>
<span class="t" style="left:862.00px;top:509.00px;font-size:12px;line-height:12px;color:#ececec;transform:scaleX(0.8557);">RECTANGLE</span>
<div style="left:860px;top:530px;width:352px;height:36px;background:#5b4c3d;"></div>
<span class="t" style="left:883.20px;top:544.00px;font-size:12px;line-height:12px;color:#e2dacf;transform:scaleX(1.0073);">Fill color</span>
<div style="left:969.5px;top:535px;width:84px;height:27px;background:#8c7e6d;"></div>
<div style="left:1100px;top:534px;width:85px;height:29px;background:#5b4c3d;border:1px solid #524537;"></div>
<span class="t" style="left:1105.80px;top:544.00px;font-size:12px;line-height:12px;color:#ddd5ca;transform:scaleX(0.9311);">#808080</span>
<span class="t" style="left:860.40px;top:578.00px;font-size:12px;line-height:12px;color:#8c8c8c;text-decoration:line-through;">Border width</span>
<div style="left:969px;top:568px;width:85px;height:29px;background:#2e2f30;border:1px solid #9a9a9a;"></div>
<span class="t" style="left:1040.93px;top:578.00px;font-size:12px;line-height:12px;color:#777;">1</span>
<span class="t" style="left:891.90px;top:612.00px;font-size:12px;line-height:12px;color:#ececec;transform:scaleX(0.9637);">Radius</span>
<div style="left:969px;top:602px;width:85px;height:29px;background:#2b2c2d;border:1px solid #1f1f1f;"></div>
<span class="t" style="left:1040.93px;top:612.00px;font-size:12px;line-height:12px;color:#ececec;">0</span>
<div style="left:840px;top:641px;width:394px;height:21px;background:#1f1f1f;"></div>
<svg style="left:846px;top:647px;" width="5" height="9" viewBox="0 0 5 9"><path d="M0 0L4.5 4.5L0 9Z" fill="#b8b8b8"/></svg>
<span class="t" style="left:862.00px;top:647.00px;font-size:12px;line-height:12px;color:#ececec;transform:scaleX(0.8816);">ADVANCED</span>
<div style="left:40px;top:703px;width:1205px;height:27px;background:#1f1f1f;"></div>
<svg style="left:48px;top:712px;" width="11" height="11" viewBox="0 0 11 11"><rect x=".5" y=".5" width="10" height="10" fill="none" stroke="#6a6a6a"/><rect x="0" y="0" width="5" height="11" fill="#6a6a6a"/></svg>
<div style="left:72px;top:707px;width:200px;height:21px;background:#252525;"></div>
<svg style="left:78px;top:710px;" width="15" height="15" viewBox="0 0 15 15"><circle cx="8.3" cy="5.3" r="4.3" fill="none" stroke="#a0a0a0" stroke-width="1.4"/><path d="M5.3 8.3L.8 12.8" stroke="#a0a0a0" stroke-width="1.7"/><path d="M9.5 12L14 12L11.75 14.2Z" fill="#a0a0a0"/></svg>
<span class="t" style="left:99.30px;top:713.00px;font-size:12px;line-height:12px;color:#858585;transform:scaleX(0.9815);">Type to locate (Ctrl+K)</span>
<div style="left:275px;top:708px;width:1px;height:19px;background:#5c5c5c;"></div>
<span class="t" style="left:285.50px;top:713.00px;font-size:12px;line-height:12px;color:#e6e6e6;transform:scaleX(0.7492);">1</span>
<span class="t" style="left:299.00px;top:713.00px;font-size:12px;line-height:12px;color:#e6e6e6;transform:scaleX(0.9083);">Issues</span>
<span class="t" style="left:347.50px;top:713.00px;font-size:12px;line-height:12px;color:#e6e6e6;transform:scaleX(0.8990);">2</span>
<span class="t" style="left:361.20px;top:713.00px;font-size:12px;line-height:12px;color:#e6e6e6;transform:scaleX(0.9156);">Search Results</span>
<span class="t" style="left:453.00px;top:713.00px;font-size:12px;line-height:12px;color:#e6e6e6;transform:scaleX(0.8990);">3</span>
<span class="t" style="left:467.00px;top:713.00px;font-size:12px;line-height:12px;color:#e6e6e6;transform:scaleX(1.0401);">Application Output</span>
<span class="t" style="left:585.50px;top:713.00px;font-size:12px;line-height:12px;color:#e6e6e6;transform:scaleX(0.8990);">5</span>
<span class="t" style="left:600.50px;top:713.00px;font-size:12px;line-height:12px;color:#e6e6e6;transform:scaleX(0.9770);">QML Debugger Console</span>
<svg style="left:745px;top:712px;" width="8" height="12" viewBox="0 0 8 12"><path d="M0.5 5L4 1L7.5 5Z M0.5 7L4 11L7.5 7Z" fill="#d0d0d0"/></svg>
<div style="left:1166px;top:707px;width:24px;height:21px;background:#141414;"></div>
<svg style="left:1171px;top:710px;" width="15" height="12" viewBox="0 0 15 12"><path d="M9 3.2L11.6 .6L14.2 3.2Z" fill="#d8d8d8"/><rect x=".6" y="7.1" width="13.3" height="3.8" rx="1.9" fill="#7a7a7a" stroke="#d0d0d0" stroke-width="1.1"/><rect x="9" y="7.9" width="4" height="2.2" fill="#111"/></svg>
<svg style="left:1203px;top:712px;" width="11" height="11" viewBox="0 0 11 11"><rect x=".5" y=".5" width="10" height="10" fill="none" stroke="#7a7a7a"/><rect x="6" y="0" width="5" height="11" fill="#7a7a7a"/></svg>
<svg style="left:1228px;top:714px;" width="16" height="16" viewBox="0 0 16 16"><path d="M0 16L16 0M4 16L16 4M8 16L16 8M12 16L16 12" stroke="#3a3a3a" stroke-width="1"/></svg>
<svg width="0" height="0" style="left:0;top:0"><defs><filter id="hs" x="-20%" y="-20%" width="150%" height="150%"><feGaussianBlur stdDeviation=".35"/></filter></defs></svg>
<div style="left:170px;top:190px;width:40px;height:40px;background:#40cd55;"></div>
<span class="t" style="left:181.80px;top:196.00px;font-size:30px;line-height:30px;color:#fff;transform:scaleX(0.7911);-webkit-text-stroke:.7px #fff;">1</span>
<div style="left:813px;top:133px;width:40px;height:40px;background:#40cd55;"></div>
<span class="t" style="left:824.46px;top:139.00px;font-size:30px;line-height:30px;color:#fff;-webkit-text-stroke:.4px #fff;">2</span>
<svg style="left:1040.3px;top:223.3px;" width="64.8" height="86.4" viewBox="0 0 64.8 86.4"><g transform="scale(3.6 3.6)" shape-rendering="crispEdges"><path d="M6 0H8V1H6ZM5 1H9V2H5ZM5 2H9V3H5ZM5 3H9V4H5ZM5 4H9V5H5ZM5 5H9V6H5ZM5 6H11V7H5ZM5 7H14V8H5ZM5 8H16V9H5ZM5 9H17V10H5ZM0 10H18V11H0ZM0 11H18V12H0ZM0 12H18V13H0ZM1 13H18V14H1ZM2 14H18V15H2ZM2 15H18V16H2ZM3 16H18V17H3ZM3 17H18V18H3ZM3 18H17V19H3ZM4 19H17V20H4ZM4 20H17V21H4ZM5 21H16V22H5ZM5 22H16V23H5ZM5 23H16V24H5Z" fill="#000" opacity=".45" transform="translate(.5 .5)" filter="url(#hs)"/><path d="M6 0H8V1H6ZM5 1H9V2H5ZM5 2H9V3H5ZM5 3H9V4H5ZM5 4H9V5H5ZM5 5H9V6H5ZM5 6H11V7H5ZM5 7H14V8H5ZM5 8H16V9H5ZM5 9H17V10H5ZM0 10H18V11H0ZM0 11H18V12H0ZM0 12H18V13H0ZM1 13H18V14H1ZM2 14H18V15H2ZM2 15H18V16H2ZM3 16H18V17H3ZM3 17H18V18H3ZM3 18H17V19H3ZM4 19H17V20H4ZM4 20H17V21H4ZM5 21H16V22H5ZM5 22H16V23H5ZM5 23H16V24H5Z" fill="none" stroke="#c0c0c0" stroke-width=".4" opacity=".5"/><path d="M6 0H8V1H6ZM5 1H9V2H5ZM5 2H9V3H5ZM5 3H9V4H5ZM5 4H9V5H5ZM5 5H9V6H5ZM5 6H11V7H5ZM5 7H14V8H5ZM5 8H16V9H5ZM5 9H17V10H5ZM0 10H18V11H0ZM0 11H18V12H0ZM0 12H18V13H0ZM1 13H18V14H1ZM2 14H18V15H2ZM2 15H18V16H2ZM3 16H18V17H3ZM3 17H18V18H3ZM3 18H17V19H3ZM4 19H17V20H4ZM4 20H17V21H4ZM5 21H16V22H5ZM5 22H16V23H5ZM5 23H16V24H5Z" fill="#fff"/><path d="M6 0H8V1H6ZM5 1H6V2H5ZM8 1H9V2H8ZM5 2H6V3H5ZM8 2H9V3H8ZM5 3H6V4H5ZM8 3H9V4H8ZM5 4H6V5H5ZM8 4H9V5H8ZM5 5H6V6H5ZM8 5H9V6H8ZM5 6H6V7H5ZM8 6H11V7H8ZM5 7H6V8H5ZM8 7H9V8H8ZM11 7H14V8H11ZM5 8H6V9H5ZM8 8H9V9H8ZM11 8H12V9H11ZM14 8H16V9H14ZM5 9H6V10H5ZM8 9H9V10H8ZM11 9H12V10H11ZM14 9H15V10H14ZM16 9H17V10H16ZM0 10H6V11H0ZM8 10H9V11H8ZM11 10H12V11H11ZM14 10H15V11H14ZM17 10H18V11H17ZM0 11H1V12H0ZM4 11H6V12H4ZM14 11H15V12H14ZM17 11H18V12H17ZM0 12H1V13H0ZM5 12H6V13H5ZM17 12H18V13H17ZM1 13H2V14H1ZM5 13H6V14H5ZM17 13H18V14H17ZM2 14H3V15H2ZM5 14H6V15H5ZM17 14H18V15H17ZM2 15H3V16H2ZM17 15H18V16H17ZM3 16H4V17H3ZM17 16H18V17H17ZM3 17H4V18H3ZM17 17H18V18H17ZM3 18H4V19H3ZM16 18H17V19H16ZM4 19H5V20H4ZM16 19H17V20H16ZM4 20H5V21H4ZM16 20H17V21H16ZM5 21H6V22H5ZM15 21H16V22H15ZM5 22H6V23H5ZM15 22H16V23H15ZM5 23H16V24H5Z" fill="#000"/></g></svg>
<svg style="left:1045.4px;top:558.4px;" width="64.8" height="86.4" viewBox="0 0 64.8 86.4"><g transform="scale(3.6 3.6)" shape-rendering="crispEdges"><path d="M6 0H8V1H6ZM5 1H9V2H5ZM5 2H9V3H5ZM5 3H9V4H5ZM5 4H9V5H5ZM5 5H9V6H5ZM5 6H11V7H5ZM5 7H14V8H5ZM5 8H16V9H5ZM5 9H17V10H5ZM0 10H18V11H0ZM0 11H18V12H0ZM0 12H18V13H0ZM1 13H18V14H1ZM2 14H18V15H2ZM2 15H18V16H2ZM3 16H18V17H3ZM3 17H18V18H3ZM3 18H17V19H3ZM4 19H17V20H4ZM4 20H17V21H4ZM5 21H16V22H5ZM5 22H16V23H5ZM5 23H16V24H5Z" fill="#000" opacity=".45" transform="translate(.5 .5)" filter="url(#hs)"/><path d="M6 0H8V1H6ZM5 1H9V2H5ZM5 2H9V3H5ZM5 3H9V4H5ZM5 4H9V5H5ZM5 5H9V6H5ZM5 6H11V7H5ZM5 7H14V8H5ZM5 8H16V9H5ZM5 9H17V10H5ZM0 10H18V11H0ZM0 11H18V12H0ZM0 12H18V13H0ZM1 13H18V14H1ZM2 14H18V15H2ZM2 15H18V16H2ZM3 16H18V17H3ZM3 17H18V18H3ZM3 18H17V19H3ZM4 19H17V20H4ZM4 20H17V21H4ZM5 21H16V22H5ZM5 22H16V23H5ZM5 23H16V24H5Z" fill="none" stroke="#c0c0c0" stroke-width=".4" opacity=".5"/><path d="M6 0H8V1H6ZM5 1H9V2H5ZM5 2H9V3H5ZM5 3H9V4H5ZM5 4H9V5H5ZM5 5H9V6H5ZM5 6H11V7H5ZM5 7H14V8H5ZM5 8H16V9H5ZM5 9H17V10H5ZM0 10H18V11H0ZM0 11H18V12H0ZM0 12H18V13H0ZM1 13H18V14H1ZM2 14H18V15H2ZM2 15H18V16H2ZM3 16H18V17H3ZM3 17H18V18H3ZM3 18H17V19H3ZM4 19H17V20H4ZM4 20H17V21H4ZM5 21H16V22H5ZM5 22H16V23H5ZM5 23H16V24H5Z" fill="#fff"/><path d="M6 0H8V1H6ZM5 1H6V2H5ZM8 1H9V2H8ZM5 2H6V3H5ZM8 2H9V3H8ZM5 3H6V4H5ZM8 3H9V4H8ZM5 4H6V5H5ZM8 4H9V5H8ZM5 5H6V6H5ZM8 5H9V6H8ZM5 6H6V7H5ZM8 6H11V7H8ZM5 7H6V8H5ZM8 7H9V8H8ZM11 7H14V8H11ZM5 8H6V9H5ZM8 8H9V9H8ZM11 8H12V9H11ZM14 8H16V9H14ZM5 9H6V10H5ZM8 9H9V10H8ZM11 9H12V10H11ZM14 9H15V10H14ZM16 9H17V10H16ZM0 10H6V11H0ZM8 10H9V11H8ZM11 10H12V11H11ZM14 10H15V11H14ZM17 10H18V11H17ZM0 11H1V12H0ZM4 11H6V12H4ZM14 11H15V12H14ZM17 11H18V12H17ZM0 12H1V13H0ZM5 12H6V13H5ZM17 12H18V13H17ZM1 13H2V14H1ZM5 13H6V14H5ZM17 13H18V14H17ZM2 14H3V15H2ZM5 14H6V15H5ZM17 14H18V15H17ZM2 15H3V16H2ZM17 15H18V16H17ZM3 16H4V17H3ZM17 16H18V17H17ZM3 17H4V18H3ZM17 17H18V18H17ZM3 18H4V19H3ZM16 18H17V19H16ZM4 19H5V20H4ZM16 19H17V20H16ZM4 20H5V21H4ZM16 20H17V21H16ZM5 21H6V22H5ZM15 21H16V22H15ZM5 22H6V23H5ZM15 22H16V23H15ZM5 23H16V24H5Z" fill="#000"/></g></svg>
<div style="left:0px;top:0px;width:1245px;height:1px;background:linear-gradient(90deg,#0e5078,#16305e);"></div>
<div style="left:0px;top:0px;width:1px;height:731px;background:#0e5078;"></div>
<div style="left:1244px;top:0px;width:1px;height:731px;background:#1c3c6c;"></div>
<div style="left:0px;top:730px;width:1245px;height:1px;background:linear-gradient(90deg,#0e5078,#1c3c6c);"></div>
</div>
</body>
</html>
